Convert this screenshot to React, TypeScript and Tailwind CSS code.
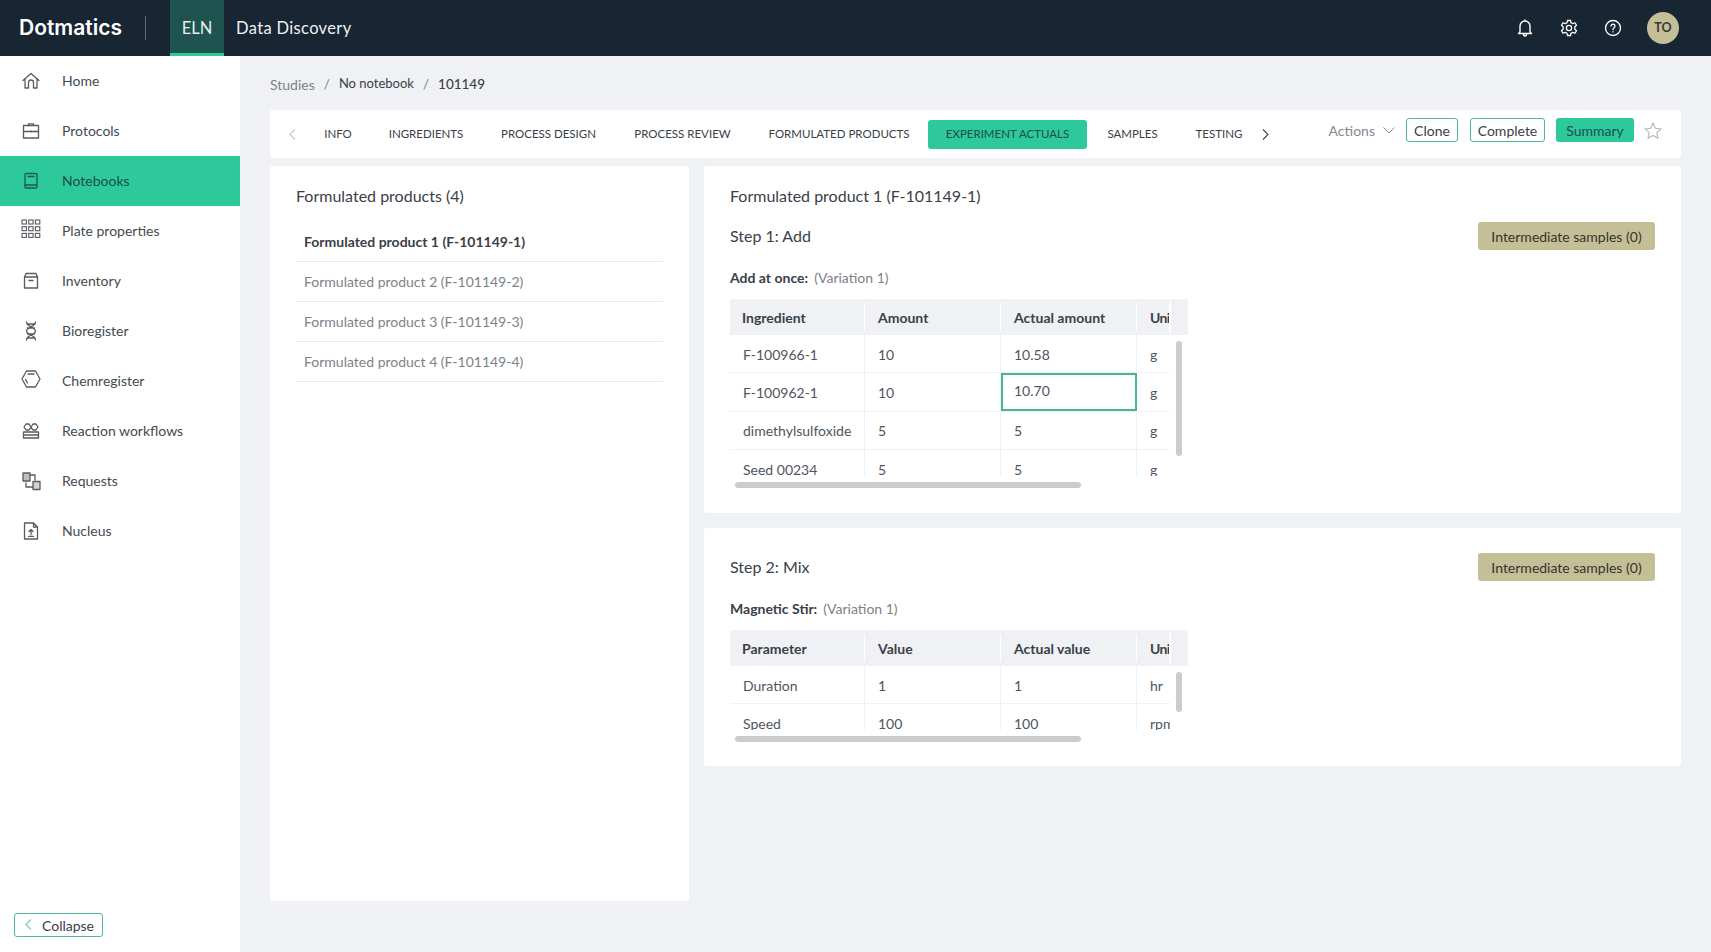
import React from "react";

const F = "[font-family:'Lato','Liberation_Sans',sans-serif]";

const sw = { fill: "none", stroke: "currentColor", strokeWidth: 1.3, strokeLinejoin: "round" as const, strokeLinecap: "round" as const };

const Home = () => (
  <svg width="18" height="18" viewBox="0 0 18 18" {...sw}><path d="M1 8.500 9 1.500l8 7" /><path d="M3 7v9h3.500v-5.500a2.500 2.500 0 0 1 5 0V16H15V7" /></svg>
);
const Case = () => (
  <svg width="18" height="18" viewBox="0 0 18 18" {...sw}><rect x="1.500" y="3.500" width="15" height="12.500" /><path d="M1.500 9.500h15M6.500 3.500V1.800h5v1.700M9 9v1" /></svg>
);
const Book = () => (
  <svg width="18" height="18" viewBox="0 0 18 18" {...sw}><rect x="3" y="1.500" width="12" height="14.500" rx="1" /><path d="M3 13h12M6 4.500h6" /></svg>
);
const Plate = () => (
  <svg className="mb-[5px]" width="20" height="20" viewBox="0 0 20 20" fill="none" stroke="currentColor" strokeWidth="1.100">
    {[0, 1, 2].map((r) => [0, 1, 2].map((c) => <rect key={`${r}${c}`} x={1 + c * 6.700} y={1 + r * 6.700} width="4.400" height="4" />))}
  </svg>
);
const Box = () => (
  <svg width="18" height="18" viewBox="0 0 18 18" {...sw}><path d="M2.500 5v11h13V5M2.500 5l1.500-3.500h10L15.500 5zM7 8.500h4" /></svg>
);
const Dna = () => (
  <svg width="18" height="20" viewBox="0 0 18 20" {...sw}><path d="M4.500 1c0 5 9 5 9 9s-9 4-9 9M13.500 1c0 5-9 5-9 9s9 4 9 9M5 3h8M5.500 7h7M5.500 13h7M5 17h8" /></svg>
);
const Hex = () => (
  <svg className="mb-[5px]" width="20" height="18" viewBox="0 0 20 18" {...sw}><path d="M5.500 1h9L19 9l-4.500 8h-9L1 9zM7 4h6M4.500 9.500l2 3.500" /></svg>
);
const Reaction = () => (
  <svg width="18" height="18" viewBox="0 0 18 18" {...sw}><path d="M4 2h3l2 3-2 3H4L2 5zM11 2h3l2 3-2 3h-3L9 5zM1.500 10h15v6h-15zM1.500 13h15" /></svg>
);
const Requests = () => (
  <svg width="19" height="19" viewBox="0 0 19 19" {...sw}><rect x="1" y="1" width="7" height="8" fill="#b9b9b9" /><rect x="11" y="9.500" width="7" height="8" fill="#d0d0d0" /><path d="M8 3h5v5M11 15H4v-4" /></svg>
);
const Nucleus = () => (
  <svg width="16" height="18" viewBox="0 0 16 18" {...sw}><path d="M1.500 1h9l4 4v12h-13zM10.500 1v4h4M8 7.500v5M6 9.500l2-2 2 2M5.500 14.300h5" /></svg>
);

const nav: [string, React.ReactNode][] = [
  ["Home", <Home />],
  ["Protocols", <Case />],
  ["Notebooks", <Book />],
  ["Plate properties", <Plate />],
  ["Inventory", <Box />],
  ["Bioregister", <Dna />],
  ["Chemregister", <Hex />],
  ["Reaction workflows", <Reaction />],
  ["Requests", <Requests />],
  ["Nucleus", <Nucleus />],
];

function Table({ head, rows, bodyH, vbar, active }: { head: string[]; rows: string[][]; bodyH: number; vbar: [number, number]; active?: boolean }) {
  return (
    <div className="w-[458px]">
      <div className="relative overflow-hidden">
        <div className="flex h-[36px] bg-[#eff1f5] rounded-t-[3px] items-center font-bold text-[14px] text-[#3b4048]">
          {head.map((h, i) => (
            <div key={h} className={`h-[28px] flex items-center border-r border-white overflow-hidden whitespace-nowrap ${i === 0 ? "w-[135px] pl-[12px]" : i === 3 ? "w-[33px] pl-[13px] tracking-[-0.6px]" : "w-[136px] pl-[13px]"}`}>
              {h}
            </div>
          ))}
        </div>
        <div className="overflow-hidden" style={{ height: bodyH }}>
          {rows.map((r, ri) => (
            <div key={ri} className="flex h-[38.400px] w-[440px] border-b border-[#eff1f5] text-[14px] text-[#50555c]">
              {r.map((c, i) => {
                const on = active && ri === 1 && i === 2;
                return (
                  <div
                    key={i}
                    className={`flex items-center overflow-hidden whitespace-nowrap ${i === 0 ? "w-[135px]" : i === 3 ? "w-[33px]" : "w-[136px]"} ${on ? "border-2 border-[#45b795] pb-[3px] pl-[11px]" : i === 3 ? "pl-[13px] pt-[1px]" : "pl-[13px] pt-[1px] border-r border-[#eff1f5]"}`}
                  >
                    {c}
                  </div>
                );
              })}
            </div>
          ))}
        </div>
        <div className="absolute left-[440px] top-0 bottom-0 w-px bg-white" />
        <div className="absolute left-[446px] w-[6px] rounded-[3px] bg-[#cccccc]" style={{ top: vbar[0], height: vbar[1] }} />
      </div>
      <div className="mt-[6px] ml-[5px] w-[346px] h-[6px] rounded-[3px] bg-[#cccccc]" />
    </div>
  );
}

export default function App() {
  return (
    <div className={`h-[952px] w-[1711px] flex flex-col overflow-hidden bg-[#eff1f5] ${F}`}>
      <header className="h-[56px] shrink-0 bg-[#182533] flex items-center text-white">
        <div className="w-[145px] pl-[19px] text-[21px] font-semibold [font-family:'Inter',sans-serif]">Dotmatics</div>
        <div className="w-px h-[24px] bg-[#5d6873]" />
        <div className="ml-[24px] w-[54px] h-[56px] pt-[3px] bg-[#1f5350] border-b-[3px] border-[#2ec99a] flex items-center justify-center text-[16.500px] text-[#e8eeee]">ELN</div>
        <div className="ml-[12px] pt-[1px] text-[16.500px] tracking-[0.35px] text-[#eef0f2]">Data Discovery</div>
        <div className="ml-auto flex items-center pr-[32px]">
          <svg width="18" height="18" viewBox="0 0 18 18" {...sw} strokeWidth={1.4}><path d="M4 13V7a5 5 0 0 1 10 0v6l1.500 1.500h-13zM7.500 15.500a1.500 1.500 0 0 0 3 0M9 1v1" /></svg>
          <svg className="ml-[26px]" width="18" height="18" viewBox="0 0 24 24" {...sw} strokeWidth={1.700}><path d="M10 2h4l.6 3 2.500 1.200L20 5l2 3.400-2.200 2v3.200l2.200 2L20 19l-2.900-1.200-2.500 1.200-.6 3h-4l-.6-3-2.500-1.200L4 19l-2-3.400 2.200-2v-3.200L2 8.400 4 5l2.900 1.200L9.400 5z" /><circle cx="12" cy="12" r="3.500" /></svg>
          <svg className="ml-[26px]" width="18" height="18" viewBox="0 0 18 18" {...sw}><circle cx="9" cy="9" r="7.500" /><path d="M7 7a2 2 0 1 1 3 1.800c-.7.4-1 .8-1 1.700M9 12.700v.2" /></svg>
          <div className="ml-[25px] w-[32px] h-[32px] rounded-full bg-[#c5bf98] text-[#3a3a32] text-[12.500px] font-bold flex items-center justify-center">TO</div>
        </div>
      </header>
      <div className="flex flex-1 min-h-0">
        <aside className="w-[240px] shrink-0 bg-white flex flex-col">
          {nav.map(([label, icon]) => (
            <div key={label} className={`h-[50px] flex items-center text-[14px] ${label === "Notebooks" ? "bg-[#2ec99a] text-[#17504a]" : "text-[#454a50]"}`}>
              <div className="w-[62px] flex justify-center opacity-90">{icon}</div>
              <span className="pb-[1px]">{label}</span>
            </div>
          ))}
          <div className="mt-auto mb-[15px] ml-[14px] w-[89px] h-[24px] rounded-[3px] border border-[#4fb89b] flex items-center text-[14px] text-[#3b4048]">
            <svg className="ml-[10px] mr-[10px] mb-[2px]" width="7" height="11" viewBox="0 0 7 11" fill="none" stroke="#7fcdb5" strokeWidth="1.200"><path d="M6 .5 1 5.500 6 10.500" /></svg>
            Collapse
          </div>
        </aside>
        <main className="flex-1 min-w-0 pl-[30px] pr-[30px]">
          <div className="h-[54px] pt-[2px] flex items-center text-[13.500px] text-[#3b4048]">
            <span className="text-[14px] text-[#7d8288]">Studies</span>
            <span className="mx-[9px] text-[#7d8288]">/</span>
            <span className="text-[13px]">No notebook</span>
            <span className="mx-[9px] text-[#7d8288]">/</span>
            <span className="font-medium">101149</span>
          </div>
          <div className="h-[48px] bg-white rounded-[3px] flex items-center text-[11.500px] text-[#3b4048] pl-[19px]">
            <svg width="7" height="11" viewBox="0 0 7 11" fill="none" stroke="#c8c8c8" strokeWidth="1.100"><path d="M6 .5 1 5.500 6 10.500" /></svg>
            <span className="ml-[10px] w-[64px] text-center">INFO</span>
            <span className="w-[112px] text-center">INGREDIENTS</span>
            <span className="w-[133px] text-center">PROCESS DESIGN</span>
            <span className="w-[135px] text-center">PROCESS REVIEW</span>
            <span className="w-[178px] text-center">FORMULATED PRODUCTS</span>
            <span className="w-[159px] h-[29px] rounded-[3px] bg-[#2ec99a] text-[#17504a] flex items-center justify-center">EXPERIMENT ACTUALS</span>
            <span className="w-[91px] text-center">SAMPLES</span>
            <span className="w-[82px] text-center">TESTING</span>
            <svg className="ml-[2px]" width="7" height="11" viewBox="0 0 7 11" fill="none" stroke="#444" strokeWidth="1.100"><path d="M1 .5 6 5.500 1 10.500" /></svg>
            <div className="ml-auto flex items-center pr-[19px] pb-[8px] text-[14px]">
              <span className="text-[#85898e]">Actions</span>
              <svg className="ml-[8px]" width="12" height="7" viewBox="0 0 12 7" fill="none" stroke="#8a8a8a" strokeWidth="1"><path d="M.5.5 6 6 11.500.5" /></svg>
              <span className="ml-[11px] w-[52px] h-[24px] rounded-[3px] border border-[#4fb89b] flex items-center justify-center">Clone</span>
              <span className="ml-[12px] w-[75px] h-[24px] rounded-[3px] border border-[#4fb89b] flex items-center justify-center">Complete</span>
              <span className="ml-[11px] w-[78px] h-[24px] rounded-[3px] bg-[#2ec99a] text-[#17504a] flex items-center justify-center">Summary</span>
              <svg className="ml-[10px]" width="18" height="17" viewBox="0 0 18 17" fill="none" stroke="#b9b9b9" strokeWidth="1.100"><path d="m9 1 2.400 5.300 5.600.6-4.200 3.800 1.200 5.600L9 13.500l-5 2.800 1.200-5.600L1 6.900l5.600-.6z" /></svg>
            </div>
          </div>
          <div className="mt-[8px] flex gap-[15px] items-start">
            <section className="w-[419px] h-[735px] bg-white rounded-[3px] px-[26px] pt-[20px]">
              <h2 className="text-[16px] leading-[20px] text-[#3b4048] font-normal">Formulated products (4)</h2>
              <ul className="mt-[16px] text-[14px]">
                {[1, 2, 3, 4].map((n) => (
                  <li key={n} className={`h-[40px] flex items-center pl-[8px] border-b border-[#e8eaee] ${n === 1 ? "font-bold text-[#3b4048]" : "text-[#7d8288]"}`}>
                    {`Formulated product ${n} (F-101149-${n})`}
                  </li>
                ))}
              </ul>
            </section>
            <div className="w-[977px] flex flex-col gap-[15px]">
              <section className="h-[347px] bg-white rounded-[3px] px-[26px] pt-[20px]">
                <h2 className="text-[16px] leading-[20px] text-[#3b4048]">Formulated product 1 (F-101149-1)</h2>
                <div className="mt-[16px] h-[28px] flex items-center justify-between">
                  <h3 className="text-[16px] text-[#3b4048]">Step 1: Add</h3>
                  <span className="w-[177px] h-[28px] rounded-[3px] bg-[#c5bf98] text-[14px] text-[#34342c] flex items-center justify-center">Intermediate samples (0)</span>
                </div>
                <div className="mt-[18px] text-[14px] leading-[20px]">
                  <b className="text-[#3b4048] font-bold">Add at once:</b>
                  <span className="ml-[6px] text-[#7d8288]">(Variation 1)</span>
                </div>
                <div className="mt-[11px]">
                  <Table
                    active
                    head={["Ingredient", "Amount", "Actual amount", "Unit"]}
                    rows={[
                      ["F-100966-1", "10", "10.58", "g"],
                      ["F-100962-1", "10", "10.70", "g"],
                      ["dimethylsulfoxide", "5", "5", "g"],
                      ["Seed 00234", "5", "5", "g"],
                    ]}
                    bodyH={141}
                    vbar={[42, 115]}
                  />
                </div>
              </section>
              <section className="h-[238px] bg-white rounded-[3px] px-[26px] pt-[25px]">
                <div className="h-[28px] flex items-center justify-between">
                  <h3 className="text-[16px] text-[#3b4048]">Step 2: Mix</h3>
                  <span className="w-[177px] h-[28px] rounded-[3px] bg-[#c5bf98] text-[14px] text-[#34342c] flex items-center justify-center">Intermediate samples (0)</span>
                </div>
                <div className="mt-[18px] text-[14px] leading-[20px]">
                  <b className="text-[#3b4048] font-bold">Magnetic Stir:</b>
                  <span className="ml-[6px] text-[#7d8288]">(Variation 1)</span>
                </div>
                <div className="mt-[11px]">
                  <Table
                    head={["Parameter", "Value", "Actual value", "Unit"]}
                    rows={[
                      ["Duration", "1", "1", "hr"],
                      ["Speed", "100", "100", "rpm"],
                    ]}
                    bodyH={64}
                    vbar={[42, 40]}
                  />
                </div>
              </section>
            </div>
          </div>
        </main>
      </div>
    </div>
  );
}
